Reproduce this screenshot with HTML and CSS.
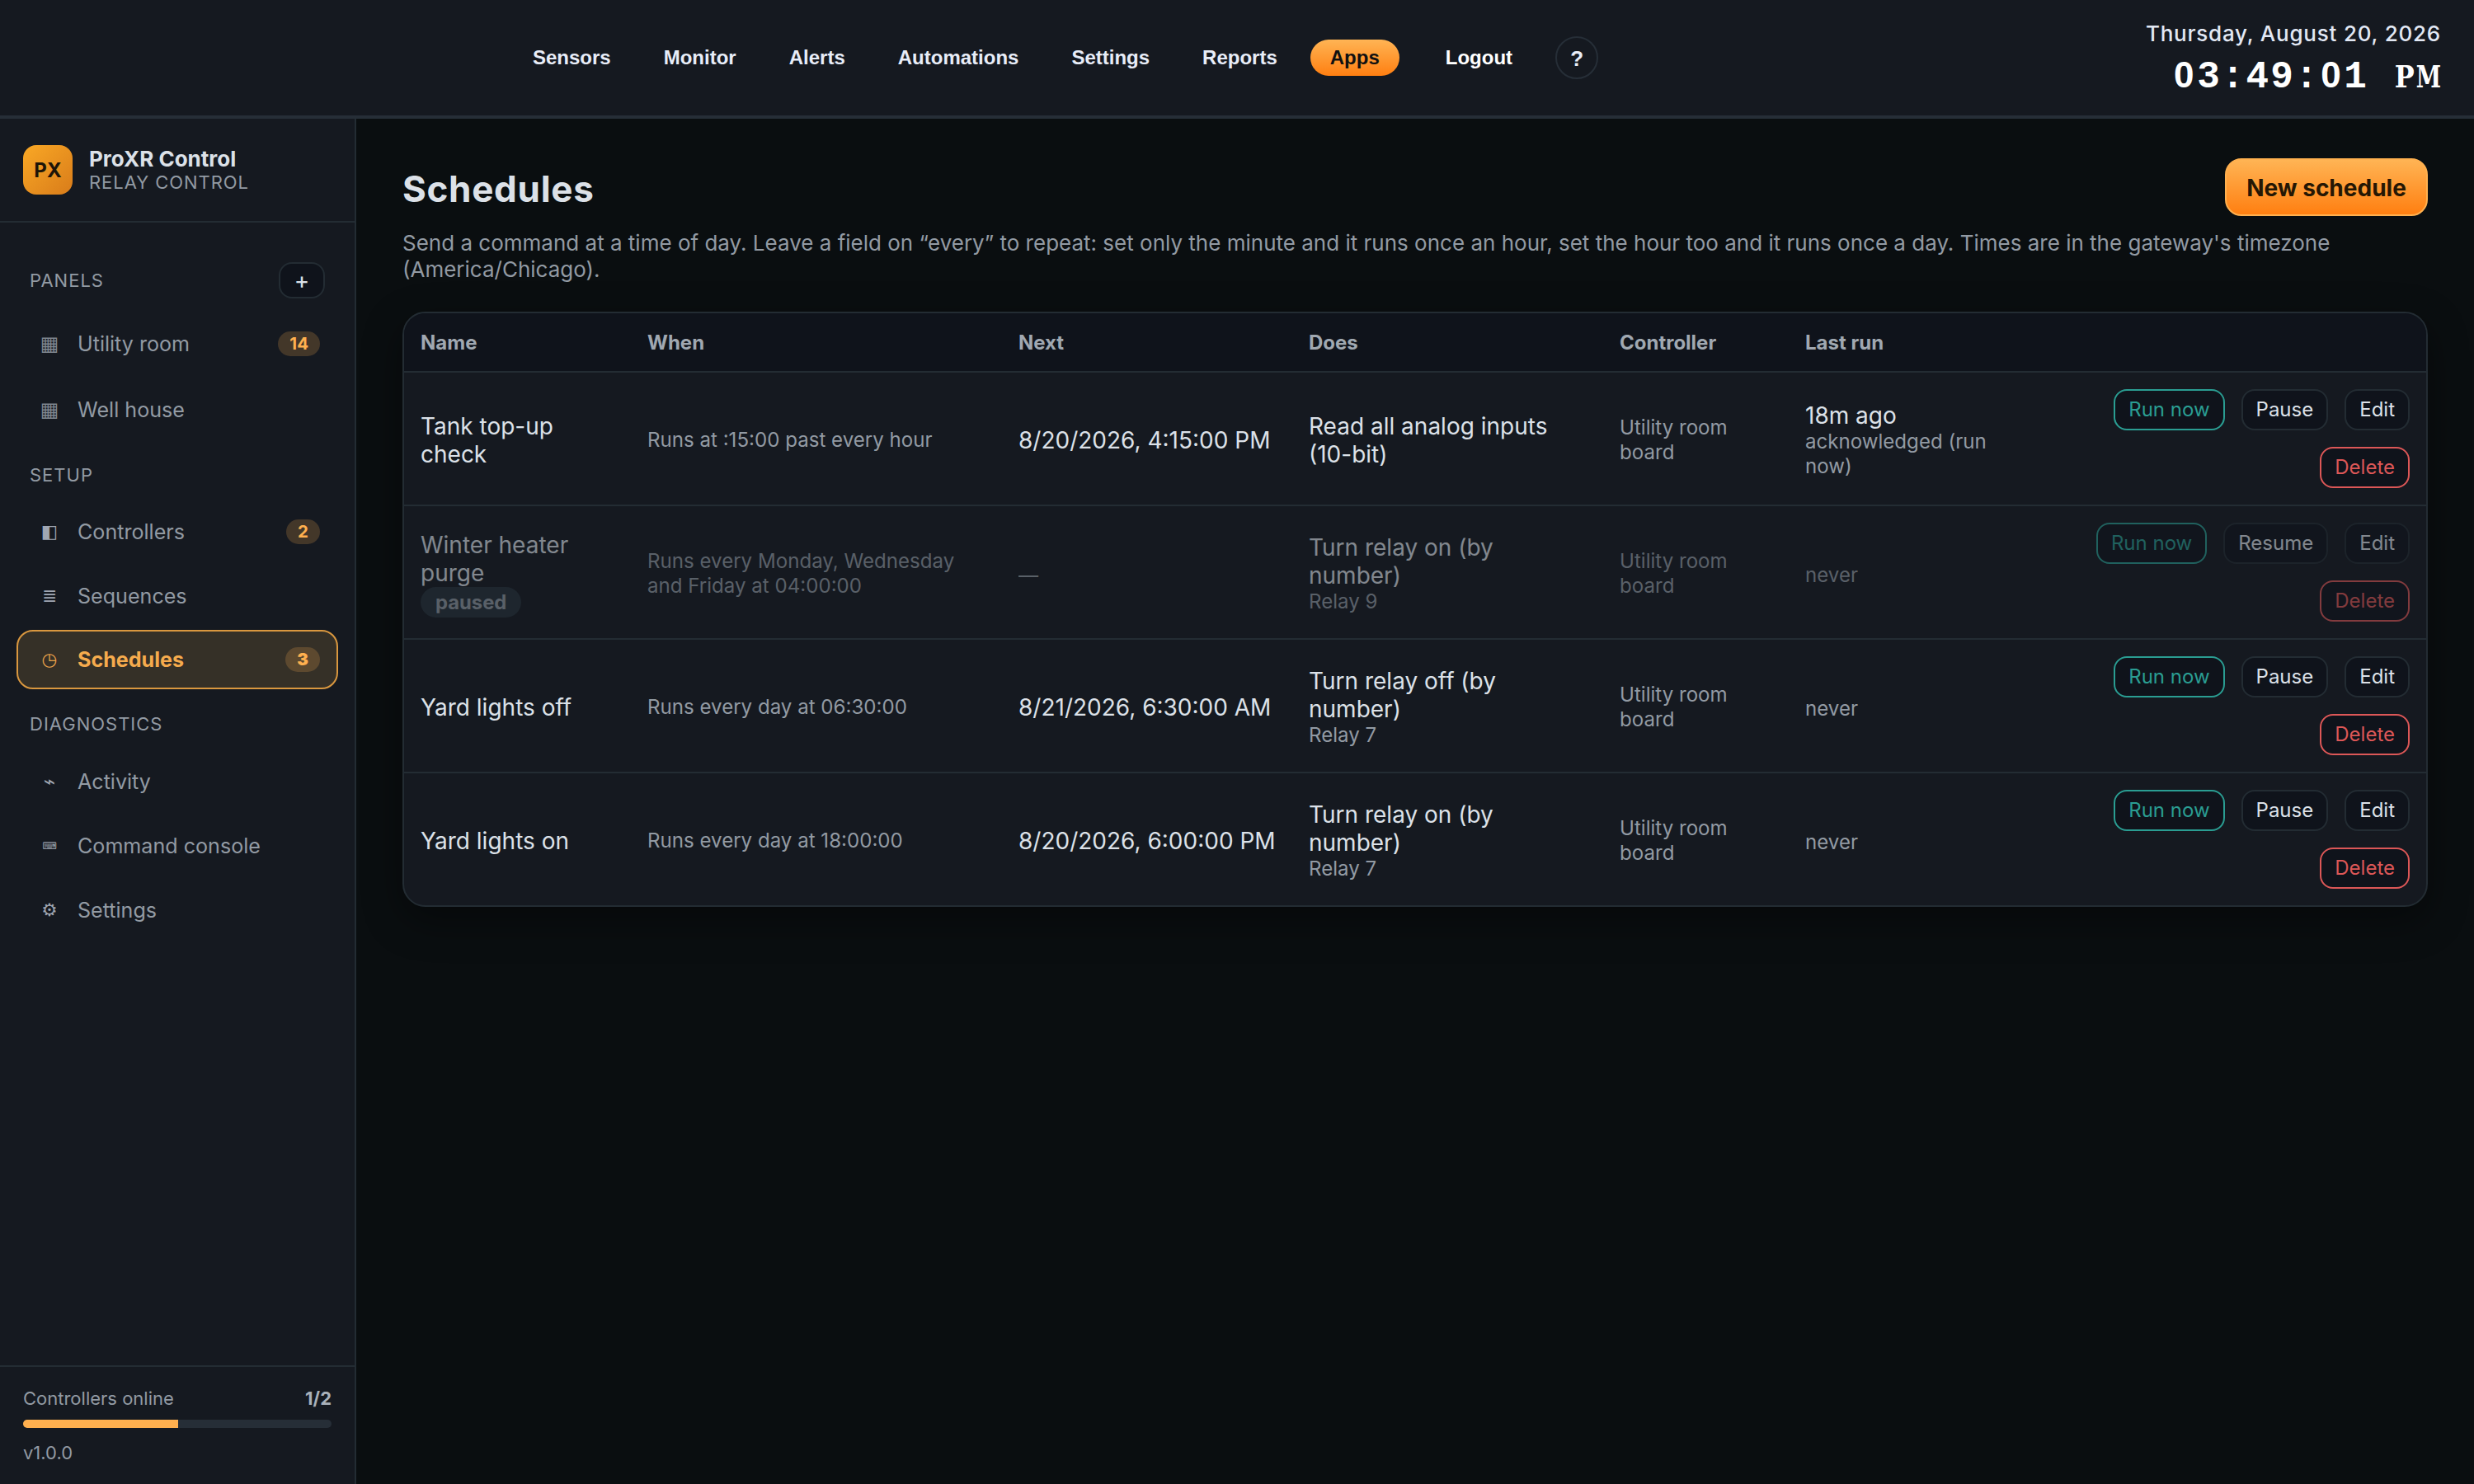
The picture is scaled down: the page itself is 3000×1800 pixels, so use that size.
FILE: index.html
```
<!DOCTYPE html>
<html lang="en">
<head>
<meta charset="utf-8">
<title>ProXR Control – Schedules</title>
<link rel="stylesheet" href="styles.css">
</head>
<body>
<header class="topbar">
  <nav class="topnav">
    <a>Sensors</a><a>Monitor</a><a>Alerts</a><a>Automations</a><a>Settings</a><a>Reports</a><a class="current">Apps</a><a class="logout">Logout</a><a class="help">?</a>
  </nav>
  <div class="clock">
    <div class="date">Thursday, August 20, 2026</div>
    <div class="time"><span class="zero">0</span><span>3</span><span>:</span><span>4</span><span>9</span><span>:</span><span class="zero">0</span><span>1</span><span>&nbsp;</span><span class="slab p">P</span><span class="slab m">M</span></div>
  </div>
</header>
<div class="shell">
  <aside class="sidebar">
    <div class="brand">
      <div class="logo">PX</div>
      <div><div class="brand-name">ProXR Control</div><div class="brand-sub">RELAY CONTROL</div></div>
    </div>
    <nav class="menu">
      <div class="label first"><span>PANELS</span><button class="add">+</button></div>
      <a class="item panel"><i>▦</i><span>Utility room</span><b>14</b></a>
      <a class="item panel"><i>▦</i><span>Well house</span></a>
      <div class="label"><span>SETUP</span></div>
      <a class="item"><i>◧</i><span>Controllers</span><b>2</b></a>
      <a class="item"><i>≣</i><span>Sequences</span></a>
      <a class="item active"><i>◷</i><span>Schedules</span><b>3</b></a>
      <div class="label"><span>DIAGNOSTICS</span></div>
      <a class="item"><i class="wave">⌁</i><span>Activity</span></a>
      <a class="item"><i class="keys">⌨</i><span>Command console</span></a>
      <a class="item"><i>⚙</i><span>Settings</span></a>
    </nav>
    <footer class="status">
      <div class="status-row"><span>Controllers online</span><strong>1/2</strong></div>
      <div class="meter"><div class="meter-fill" style="width:50.3%"></div></div>
      <div>v1.0.0</div>
    </footer>
  </aside>
  <main class="main">
    <div class="head"><h1>Schedules</h1><button class="primary">New schedule</button></div>
    <p class="intro">Send a command at a time of day. Leave a field on “every” to repeat: set only the minute and it runs once an hour, set the hour too and it runs once a day. Times are in the gateway's timezone (America/Chicago).</p>
    <div class="card">
      <table>
        <colgroup><col class="c-name"><col class="c-when"><col class="c-next"><col class="c-does"><col class="c-ctrl"><col class="c-last"><col></colgroup>
        <thead><tr><th>Name</th><th>When</th><th>Next</th><th>Does</th><th>Controller</th><th>Last run</th><th></th></tr></thead>
        <tbody>
          <tr>
            <td class="name">Tank top-up check</td><td class="small">Runs at :15:00 past every hour</td><td class="next">8/20/2026, 4:15:00 PM</td><td class="does">Read all analog inputs (10-bit)</td><td class="small">Utility room board</td>
            <td>18m ago<div class="small">acknowledged (run now)</div></td>
            <td class="tools"><div class="actions"><button class="go">Run now</button><button>Pause</button><button>Edit</button><button class="danger">Delete</button></div></td>
          </tr>
          <tr class="off">
            <td class="name"><div>Winter heater purge<br><span class="pill">paused</span></div></td><td class="small"><div>Runs every Monday, Wednesday and Friday at 04:00:00</div></td><td><div><span class="small">—</span></div></td><td class="does"><div>Turn relay on (by number)<div class="small">Relay 9</div></div></td><td class="small"><div>Utility room board</div></td>
            <td><div><span class="small">never</span></div></td>
            <td class="tools"><div class="actions"><button class="go">Run now</button><button>Resume</button><button>Edit</button><button class="danger">Delete</button></div></td>
          </tr>
          <tr>
            <td class="name">Yard lights off</td><td class="small">Runs every day at 06:30:00</td><td class="next">8/21/2026, 6:30:00 AM</td><td class="does">Turn relay off (by number)<div class="small">Relay 7</div></td><td class="small">Utility room board</td>
            <td><span class="small">never</span></td>
            <td class="tools"><div class="actions"><button class="go">Run now</button><button>Pause</button><button>Edit</button><button class="danger">Delete</button></div></td>
          </tr>
          <tr>
            <td class="name">Yard lights on</td><td class="small">Runs every day at 18:00:00</td><td class="next">8/20/2026, 6:00:00 PM</td><td class="does">Turn relay on (by number)<div class="small">Relay 7</div></td><td class="small">Utility room board</td>
            <td><span class="small">never</span></td>
            <td class="tools"><div class="actions"><button class="go">Run now</button><button>Pause</button><button>Edit</button><button class="danger">Delete</button></div></td>
          </tr>
        </tbody>
      </table>
    </div>
  </main>
</div>
</body>
</html>
```
FILE: styles.css
```
:root {
  --bg: #0a0e10;
  --surface: #151920;
  --inset: #0f131b;
  --line: #232c33;
  --text: #dce1e8;
  --muted: #929aa3;
  --amber: #ffb04f;
}
* { box-sizing: border-box; }
body {
  margin: 0;
  height: 1800px;
  display: flex;
  flex-direction: column;
  background: var(--bg);
  color: var(--text);
  font: 28px/34px Inter, "DejaVu Sans", sans-serif;
}
button { font: inherit; color: inherit; margin: 0; }

/* top bar */
.topbar {
  height: 144px;
  flex: none;
  display: flex;
  justify-content: space-between;
  padding: 0 40px 0 622px;
  background: var(--surface);
  border-bottom: 4px solid #262e37;
}
.topnav {
  display: flex;
  align-items: center;
  gap: 16px;
  font: bold 24px/28px "Liberation Sans", Arial, sans-serif;
  color: #e8edf8;
}
.topnav a { padding: 8px 24px; border-radius: 22px; }
.topnav .current { color: #111; background: linear-gradient(#ffb454, #ff7f11); }
.topnav .logout { color: #fff; margin-left: 16px; }
.topnav .help {
  width: 52px;
  height: 52px;
  padding: 0;
  margin-left: 12px;
  border: 2px solid #262e37;
  border-radius: 50%;
  text-align: center;
  line-height: 50px;
  font-size: 26px;
}
.clock { padding-top: 24px; text-align: right; }
.date {
  font-size: 26px;
  line-height: 34px;
  font-weight: 500;
  letter-spacing: .78px;
  color: #e2e8f4;
}
.time {
  display: flex;
  align-items: baseline;
  justify-content: flex-end;
  margin-top: 9px;
  font: bold 46px/48px "Liberation Mono", monospace;
  color: #fff;
}
.time span { width: 29.7px; text-align: center; }
.time .zero { font-family: "Liberation Sans", sans-serif; font-size: 44px; }
.time .slab { font-family: "DejaVu Serif", serif; font-size: 37px; }
.time .p { transform: scaleX(.86); }
.time .m { transform: scaleX(.74); display: flex; justify-content: center; }

.shell { flex: 1; display: flex; min-height: 0; }

/* sidebar */
.sidebar {
  width: 432px;
  flex: none;
  display: flex;
  flex-direction: column;
  background: var(--surface);
  border-right: 2px solid var(--line);
  color: var(--muted);
}
.brand {
  height: 126px;
  display: flex;
  align-items: center;
  gap: 20px;
  padding: 0 28px;
  border-bottom: 2px solid var(--line);
}
.logo {
  width: 60px;
  height: 60px;
  border-radius: 16px;
  background: linear-gradient(135deg, #f9a825, #d97c1a);
  color: #1c1408;
  font-size: 24px;
  line-height: 61px;
  font-weight: 700;
  text-align: center;
}
.brand-name { font-size: 26px; line-height: 30px; font-weight: 700; color: var(--text); }
.brand-sub { font-size: 22px; line-height: 26px; letter-spacing: .95px; }
.menu { flex: 1; padding: 36px 20px 0; }
.label {
  height: 75px;
  display: flex;
  align-items: center;
  justify-content: space-between;
  padding: 9px 16px 0;
  font-size: 22px;
  letter-spacing: 1px;
}
.label.first { padding: 0 16px; height: 68px; margin-bottom: 6px; }
.add {
  width: 56px;
  height: 44px;
  padding: 0;
  border: 2px solid var(--line);
  border-radius: 16px;
  background: var(--inset);
  color: var(--text);
  font-size: 28px;
  line-height: 36px;
}
.item {
  height: 72px;
  display: flex;
  align-items: center;
  padding: 0 20px 0 24px;
  border: 2px solid transparent;
  border-radius: 20px;
  font-size: 25.1px;
}
.item + .item { margin-top: 6px; }
.item.active, .item.active + .label { position: relative; top: -1px; }
.item.panel { height: 74px; }
.item span { flex: 1; margin-left: 20px; }
.item i {
  width: 28px;
  font: 21.6px/28px "DejaVu Sans", sans-serif;
  text-align: center;
  color: #a0a7b3;
}
.item.panel i { font-size: 24px; color: #7f868f; }
.item .wave { font-size: 24px; }
.item .keys { font-size: 12px; }
.item b {
  padding: 0 14px;
  border-radius: 15px;
  background: rgba(255, 176, 79, .2);
  color: var(--amber);
  font-size: 20.5px;
  line-height: 30px;
}
.item.active {
  background: #353027;
  border-color: #d9973f;
  color: #f6ab4d;
  font-weight: 700;
}
.item.active i { color: #e9a24a; }
.status {
  height: 144px;
  padding: 24px 28px;
  border-top: 2px solid var(--line);
  font-size: 22px;
  line-height: 28px;
}
.status-row { display: flex; justify-content: space-between; }
.status strong { color: #a9b1ba; }
.meter {
  height: 10px;
  margin: 12px 0 16px;
  border-radius: 5px;
  background: #262e37;
  overflow: hidden;
}
.meter-fill { height: 100%; background: var(--amber); }

/* content */
.main { flex: 1; padding: 48px 56px; }
.head { height: 70px; display: flex; align-items: center; justify-content: space-between; }
h1 { margin: 0; padding-top: 3px; font-size: 44px; line-height: 54px; font-weight: 700; letter-spacing: .7px; }
.primary {
  height: 70px;
  width: 246px;
  padding: 2px 0 0;
  border: 2px solid #ffb04f;
  border-radius: 20px;
  background: linear-gradient(#ffb454, #ff7f11);
  color: #251704;
  font-weight: 700;
}
.intro { margin: 17px 0 35px; font-size: 26px; line-height: 32px; color: var(--muted); }
.card {
  border: 2px solid var(--line);
  border-radius: 28px;
  background: var(--surface);
  overflow: hidden;
  box-shadow: 0 16px 48px rgba(0, 0, 0, .4);
}
table { width: 100%; table-layout: fixed; border-collapse: separate; border-spacing: 0; }
.c-name { width: 275px; }
.c-when { width: 450px; }
.c-next { width: 352px; }
.c-does { width: 377px; }
.c-ctrl { width: 225px; }
.c-last { width: 265px; }
th {
  height: 72px;
  padding: 1px 20px 0;
  text-align: left;
  background: var(--inset);
  border-bottom: 2px solid var(--line);
  font-size: 24px;
  font-weight: 700;
  color: #a0a8b1;
}
td { height: 162px; padding: 3px 20px 0; border-bottom: 2px solid var(--line); }
tr:last-child td { height: 160px; border-bottom: 0; }
td.name { padding-right: 40px; }
td.does { padding-right: 56px; }
td.next { white-space: nowrap; padding-right: 0; }
td.tools { padding-top: 0; }
.small { font-size: 24.1px; line-height: 30px; color: var(--muted); }
.off td > div { opacity: .55; }
.pill {
  padding: 4px 18px;
  border-radius: 19px;
  background: #26323a;
  font-size: 23.8px;
  font-weight: 700;
  color: var(--muted);
}
.actions { display: flex; flex-wrap: wrap; justify-content: flex-end; gap: 20px; }
.actions button {
  height: 50px;
  padding: 0 16px;
  border: 2px solid var(--line);
  border-radius: 16px;
  background: var(--inset);
  font-size: 24px;
  line-height: 44px;
}
.actions .go { border-color: #2a9d92; color: #2a9d92; }
.actions .danger { border-color: #dc5757; color: #dc5757; }
```
